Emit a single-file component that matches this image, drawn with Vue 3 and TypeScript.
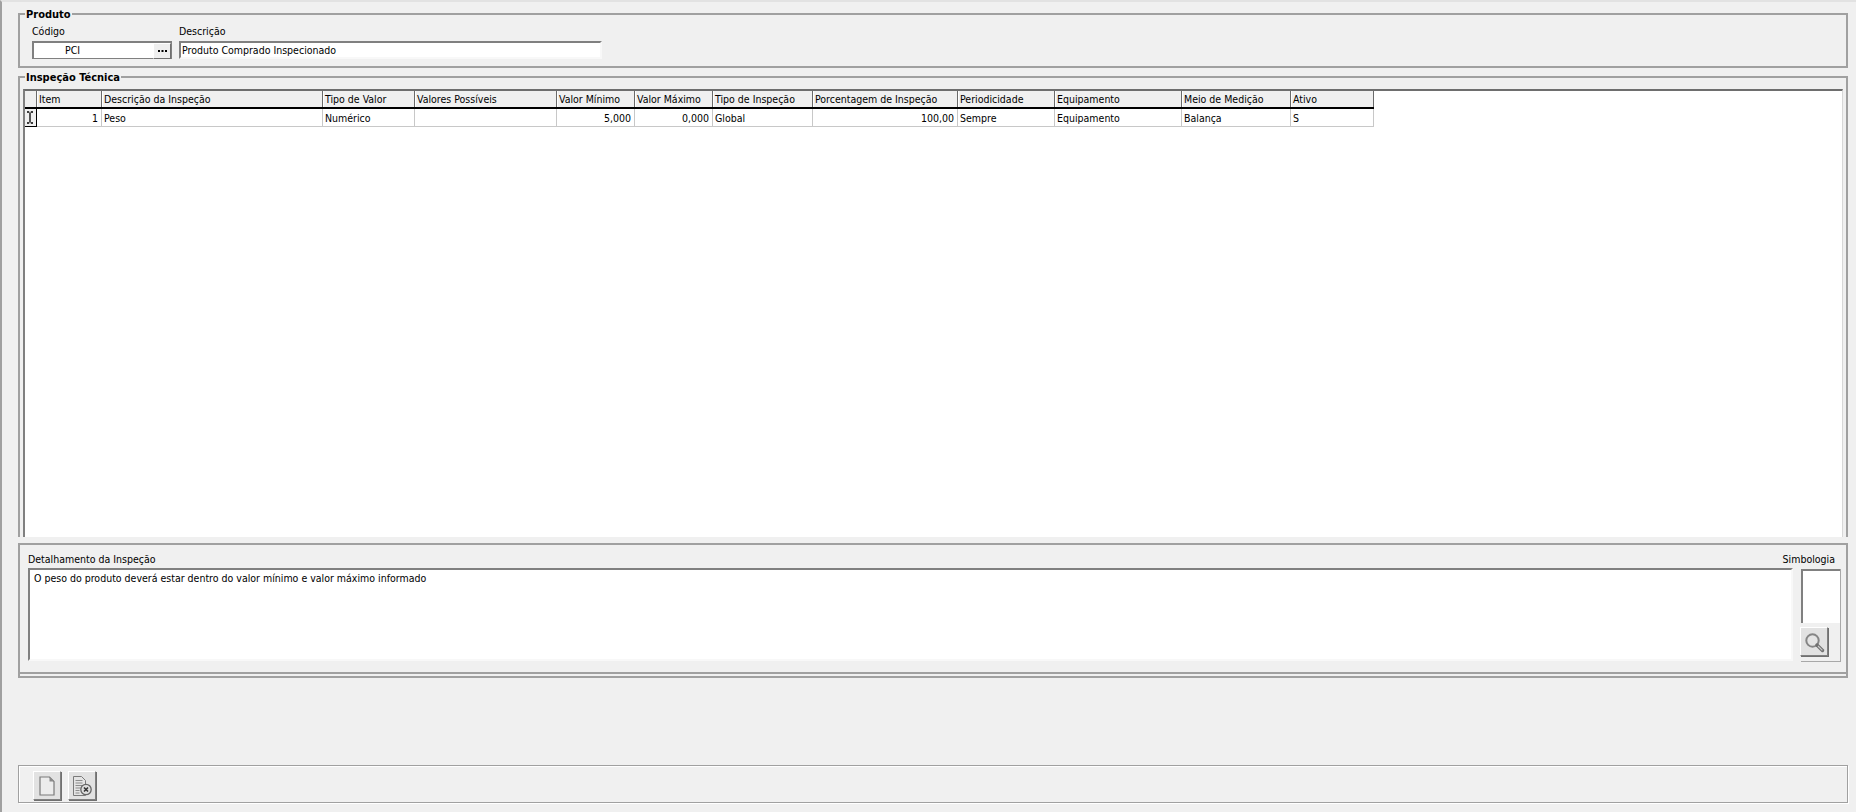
<script setup lang="ts">
interface Column {
  title: string;
  width: number;
  value: string;
  right?: boolean;
}

const columns: Column[] = [
  { title: 'Item', width: 65, value: '1', right: true },
  { title: 'Descrição da Inspeção', width: 221, value: 'Peso' },
  { title: 'Tipo de Valor', width: 92, value: 'Numérico' },
  { title: 'Valores Possíveis', width: 142, value: '' },
  { title: 'Valor Mínimo', width: 78, value: '5,000', right: true },
  { title: 'Valor Máximo', width: 78, value: '0,000', right: true },
  { title: 'Tipo de Inspeção', width: 100, value: 'Global' },
  { title: 'Porcentagem de Inspeção', width: 145, value: '100,00', right: true },
  { title: 'Periodicidade', width: 97, value: 'Sempre' },
  { title: 'Equipamento', width: 127, value: 'Equipamento' },
  { title: 'Meio de Medição', width: 109, value: 'Balança' },
  { title: 'Ativo', width: 83, value: 'S' },
];

const gridColumns = '12px ' + columns.map((c) => c.width + 'px').join(' ');
</script>

<template>
  <div class="screen">
    <fieldset class="group produto">
      <div class="legend">Produto</div>
      <div class="fields">
        <div class="field">
          <label>Código</label>
          <div class="input codigo">
            <span class="codigo-text">PCI</span>
            <button type="button" class="dots" aria-label="Buscar">
              <svg width="9" height="3" viewBox="0 0 9 3">
                <path d="M0 0h2v2H0zM3.5 0h2v2h-2zM7 0h2v2H7z" fill="#000" />
              </svg>
            </button>
          </div>
        </div>
        <div class="field">
          <label>Descrição</label>
          <div class="input descricao">Produto Comprado Inspecionado</div>
        </div>
      </div>
    </fieldset>

    <fieldset class="group inspecao">
      <div class="legend">Inspeção Técnica</div>
      <div class="grid-box">
        <div class="grid-row head" :style="{ gridTemplateColumns: gridColumns }">
          <div class="cell corner"></div>
          <div v-for="c in columns" :key="c.title" class="cell">{{ c.title }}</div>
        </div>
        <div class="grid-row body-row" :style="{ gridTemplateColumns: gridColumns }">
          <div class="cell indicator">
            <svg width="8" height="13" viewBox="0 0 8 13">
              <path d="M1 1h2.2M4.8 1H7M1 12h2.2M4.8 12H7M4 1.5v10" fill="none" stroke="#000" stroke-width="1.3" />
            </svg>
          </div>
          <div v-for="c in columns" :key="c.title" class="cell" :class="{ right: c.right }">{{ c.value }}</div>
        </div>
      </div>
    </fieldset>

    <div class="detail-wrap">
      <div class="detail">
        <div class="detail-main">
          <label>Detalhamento da Inspeção</label>
          <div class="memo">O peso do produto deverá estar dentro do valor mínimo e valor máximo informado</div>
        </div>
        <div class="simbologia">
          <label>Simbologia</label>
          <div class="sym-box">
            <div class="sym-image"></div>
            <div class="sym-actions">
              <button type="button" class="tool small" aria-label="Visualizar">
                <svg width="22" height="22" viewBox="0 0 22 22">
                  <circle cx="9.5" cy="9.5" r="6.2" fill="#e4e4e4" stroke="#858585" stroke-width="2" />
                  <path d="M14 14l5.5 5.5" stroke="#6f6f6f" stroke-width="3.4" stroke-linecap="round" />
                  <path d="M15 15l4.4 4.4" stroke="#c8c8c8" stroke-width="1.2" />
                </svg>
              </button>
            </div>
          </div>
        </div>
      </div>
    </div>

    <div class="spacer"></div>

    <div class="toolbar">
      <button type="button" class="tool" aria-label="Novo">
        <svg width="16" height="20" viewBox="0 0 16 20">
          <path d="M1 1h9.5L15 5.5V19H1z" fill="#ececec" stroke="#7b7b7b" stroke-width="1.2" />
          <path d="M10.5 1v4.5H15z" fill="#8a8a8a" />
        </svg>
      </button>
      <button type="button" class="tool" aria-label="Excluir">
        <svg width="22" height="22" viewBox="0 0 22 22">
          <path d="M2.5 1.5h8l4 4v15h-12z" fill="#e4e4e4" stroke="#7b7b7b" />
          <path d="M4.5 5.5h7M4.5 8h7M4.5 10.5h7M4.5 13h5M4.5 15.5h4M4.5 18h4" stroke="#8c8c8c" />
          <circle cx="15" cy="14.5" r="5.2" fill="#dedede" stroke="#666" stroke-width="1.3" />
          <path d="M13 12.5l4 4M17 12.5l-4 4" stroke="#333" stroke-width="1.6" />
        </svg>
      </button>
    </div>
  </div>
</template>

<style>
html,
body {
  margin: 0;
  overflow: hidden;
  background: #f0f0f0;
}
</style>

<style scoped>
.screen {
  box-sizing: border-box;
  width: 1856px;
  height: 812px;
  padding: 11px 8px 9px 16px;
  display: flex;
  flex-direction: column;
  background: #f0f0f0;
  border-top: 2px solid #e2e2e2;
  border-left: 2px solid #a0a0a0;
  font: 10.5px "DejaVu Sans Condensed", "DejaVu Sans", sans-serif;
  font-stretch: condensed;
  color: #000;
}
.group {
  box-sizing: border-box;
  margin: 0;
  padding: 0;
  min-width: 0;
  border: 2px solid #a0a0a0;
}
.legend {
  width: fit-content;
  margin: -7px 0 0 5px;
  padding: 0 1px;
  height: 13px;
  line-height: 13px;
  background: #f0f0f0;
  font-size: 11px;
  font-weight: 700;
}
.produto {
  height: 55px;
  flex: none;
}
.fields {
  display: flex;
  gap: 7px;
  margin: 5px 0 0 12px;
}
.field label {
  display: block;
  height: 15px;
  line-height: 11px;
}
.input {
  box-sizing: border-box;
  height: 18px;
  background: #fff;
  border: 2px solid;
  border-color: #808080 #f8f8f8 #f8f8f8 #808080;
  line-height: 15px;
  padding-left: 1px;
}
.codigo {
  width: 140px;
  display: flex;
  justify-content: space-between;
  border-right: 1px solid #808080;
  border-bottom: 1px solid #808080;
}
.codigo-text {
  margin-left: 30px;
}
.dots {
  box-sizing: border-box;
  width: 18px;
  height: 16px;
  padding: 0;
  display: flex;
  align-items: center;
  justify-content: center;
  background: #efefef;
  border: 1px solid;
  border-color: #fff #707070 #707070 #fff;
}
.descricao {
  width: 423px;
}
.inspecao {
  margin-top: 8px;
  height: 461px;
  flex: none;
  border-bottom: 0;
  display: flex;
  flex-direction: column;
}
.inspecao .legend {
  flex: none;
}
.grid-box {
  box-sizing: border-box;
  flex: none;
  margin: 5px 3px 0;
  height: 448px;
  background: #fff;
  border-top: 2px solid #6e6e6e;
  border-left: 2px solid #808080;
  border-right: 1px solid #d8d8d8;
  overflow: hidden;
}
.grid-row {
  display: grid;
  width: fit-content;
}
.head {
  height: 16px;
  background: #f0f0f0;
  border-bottom: 2px solid #000;
}
.head .cell {
  border-right: 1px solid #6a6a6a;
  border-left: 1px solid #fff;
  line-height: 16px;
}
.head .corner {
  border-left: 0;
}
.body-row {
  height: 18px;
}
.body-row .cell {
  border-right: 1px solid #c8c8c8;
  border-bottom: 1px solid #c8c8c8;
  line-height: 18px;
  padding-left: 2px;
}
.cell {
  box-sizing: border-box;
  min-width: 0;
  padding: 0 2px 0 1px;
  white-space: nowrap;
  overflow: hidden;
}
.body-row .right {
  text-align: right;
  padding-right: 3px;
}
.body-row .indicator {
  padding: 2px 0 0 1px;
  background: #f0f0f0;
  border-right: 1px solid #000;
  border-bottom: 1px solid #000;
  line-height: 0;
}
.detail-wrap {
  margin-top: 6px;
  flex: none;
  border: 2px solid #a0a0a0;
  border-top: 0;
  padding-bottom: 2px;
}
.detail {
  box-sizing: border-box;
  height: 131px;
  padding: 8px 5px 0 8px;
  display: flex;
  gap: 8px;
  border-top: 2px solid #a0a0a0;
  border-bottom: 2px solid #a0a0a0;
}
.detail-main {
  flex: 1;
  min-width: 0;
  display: flex;
  flex-direction: column;
}
.detail label {
  display: block;
  height: 15px;
  line-height: 13px;
}
.memo {
  box-sizing: border-box;
  height: 93px;
  padding: 2px 0 0 4px;
  background: #fff;
  border: 2px solid;
  border-color: #808080 #f8f8f8 #f8f8f8 #808080;
}
.simbologia {
  flex: none;
  width: 40px;
}
.simbologia .sym-box {
  margin-top: 1px;
  height: 92px;
  display: flex;
  flex-direction: column;
  border-right: 1px solid #a8a8a8;
  border-bottom: 1px solid #a8a8a8;
}
.simbologia label {
  width: 60px;
  margin-left: -26px;
  text-align: right;
}
.sym-image {
  box-sizing: border-box;
  height: 54px;
  background: #fff;
  border-top: 2px solid #808080;
  border-left: 2px solid #808080;
}
.sym-actions {
  padding-top: 4px;
  margin-left: -1px;
}
.tool {
  box-sizing: border-box;
  width: 28px;
  height: 29px;
  padding: 0;
  display: flex;
  align-items: center;
  justify-content: center;
  background: #e2e2e2;
  border: 1px solid;
  border-color: #fff #808080 #808080 #fff;
  box-shadow: 1px 1px 0 #707070;
}
.spacer {
  flex: 1;
}
.toolbar {
  box-sizing: border-box;
  flex: none;
  height: 38px;
  padding: 5px 0 0 14px;
  display: flex;
  gap: 7px;
  border: 1px solid #a0a0a0;
  box-shadow: 1px 1px 0 #fff, inset 1px 1px 0 #fff;
}
</style>
